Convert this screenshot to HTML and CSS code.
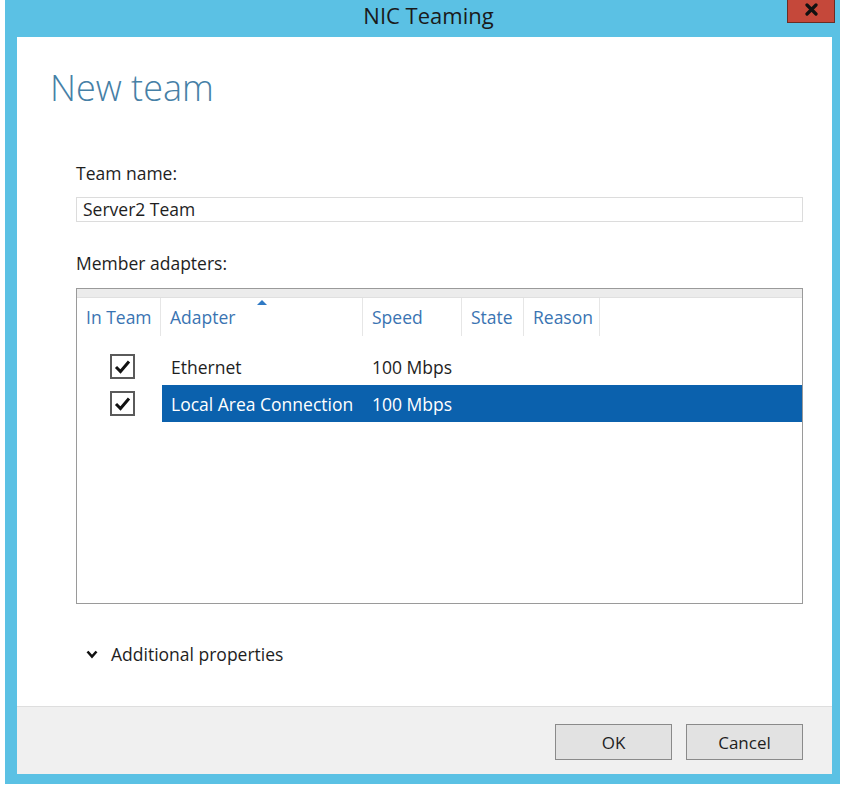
FILE: index.html
```html
<!DOCTYPE html>
<html lang="en">
<head>
    <meta charset="UTF-8">
    <title>NIC Teaming</title>
    <link rel="stylesheet" href="styles.css">
</head>
<body>
    <div class="window">
        <div class="titlebar">
            <span class="title">NIC Teaming</span>
            <button class="close-btn" aria-label="Close">
                <svg width="13" height="13" viewBox="0 0 13 13"><path d="M2 2 L11 11 M11 2 L2 11" stroke="#111" stroke-width="3.2" stroke-linecap="round"/></svg>
            </button>
        </div>
        <div class="content">
            <div class="main">
                <h1 class="heading">New team</h1>

                <label class="field-label">Team name:</label>
                <div class="text-input">Server2 Team</div>

                <label class="field-label adapters-label">Member adapters:</label>
                <div class="list-box">
                    <div class="list-top"></div>
                    <div class="list-header">
                        <div class="col">In Team</div>
                        <div class="col sorted">Adapter</div>
                        <div class="col">Speed</div>
                        <div class="col">State</div>
                        <div class="col">Reason</div>
                        <div class="col last"></div>
                    </div>
                    <div class="list-body">
                        <div class="list-row">
                            <div class="check-cell">
                                <span class="checkbox">
                                    <svg width="17" height="15" viewBox="0 0 17 15"><path d="M2 8 L6.5 12.5 L15 2.5" fill="none" stroke="#111" stroke-width="3"/></svg>
                                </span>
                            </div>
                            <div class="row-data">
                                <div class="cell">Ethernet</div>
                                <div class="cell">100 Mbps</div>
                                <div class="cell"></div>
                                <div class="cell"></div>
                                <div class="cell"></div>
                            </div>
                        </div>
                        <div class="list-row selected">
                            <div class="check-cell">
                                <span class="checkbox">
                                    <svg width="17" height="15" viewBox="0 0 17 15"><path d="M2 8 L6.5 12.5 L15 2.5" fill="none" stroke="#111" stroke-width="3"/></svg>
                                </span>
                            </div>
                            <div class="row-data">
                                <div class="cell">Local Area Connection</div>
                                <div class="cell">100 Mbps</div>
                                <div class="cell"></div>
                                <div class="cell"></div>
                                <div class="cell"></div>
                            </div>
                        </div>
                    </div>
                </div>

                <div class="expander">
                    <svg class="chevron" width="12" height="9" viewBox="0 0 12 9">
                        <polyline points="1.5,1.5 6,6.5 10.5,1.5" fill="none" stroke="#111" stroke-width="2.6"/>
                    </svg>
                    <span>Additional properties</span>
                </div>
            </div>

            <div class="footer">
                <button class="dlg-btn">OK</button>
                <button class="dlg-btn">Cancel</button>
            </div>
        </div>
    </div>
</body>
</html>
```

FILE: styles.css
```css
body {
    margin: 0;
    background: #ffffff;
    font-family: "Open Sans", "Noto Sans", sans-serif;
    color: #1e1e1e;
}

.window {
    margin-left: 5px;
    width: 835px;
    box-sizing: border-box;
    background: #5bc1e4;
    padding: 0 8px 10px 12px;
}

.titlebar {
    height: 37px;
    position: relative;
    display: flex;
    justify-content: center;
    align-items: center;
}

.title {
    font-size: 22px;
    color: #1a1a1a;
    margin-top: -7px;
    margin-left: 8px;
}

.close-btn {
    position: absolute;
    top: 0;
    right: -3px;
    width: 48px;
    height: 23px;
    background: #c5483a;
    border: 1px solid #6a2d24;
    border-top: none;
    padding: 0 0 3px 0;
    display: flex;
    align-items: center;
    justify-content: center;
}

.content {
    background: #ffffff;
    height: 737px;
    display: flex;
    flex-direction: column;
}

.main {
    flex: 1;
    padding: 0 29px 0 59px;
}

.heading {
    margin: 27px 0 0 -26px;
    font-size: 36px;
    font-weight: 300;
    color: #4680a6;
    line-height: 48px;
}

.field-label {
    display: block;
    font-size: 17.5px;
    line-height: 24px;
    margin-top: 49px;
}

.text-input {
    margin-top: 12px;
    height: 25px;
    border: 1px solid #dcdcdc;
    box-sizing: border-box;
    padding-left: 6px;
    font-size: 17.5px;
    line-height: 23px;
}

.adapters-label {
    margin-top: 29px;
}

.list-box {
    margin-top: 13px;
    height: 316px;
    box-sizing: border-box;
    border: 1px solid #9a9a9a;
}

.list-top {
    height: 8px;
    background: #ececec;
    border-bottom: 1px solid #e0e0e0;
}

.list-header {
    display: grid;
    grid-template-columns: 84px 202px 99px 62px 76px 1fr;
    height: 38px;
}

.col {
    border-right: 1px solid #e6e6e6;
    padding-left: 9px;
    font-size: 17.5px;
    line-height: 38px;
    color: #3a74b2;
    position: relative;
    white-space: nowrap;
}

.col.last {
    border-right: none;
}

.col.sorted::before {
    content: "";
    position: absolute;
    top: 2px;
    left: 96px;
    border-left: 5px solid transparent;
    border-right: 5px solid transparent;
    border-bottom: 5px solid #2f79c4;
}

.list-body {
    padding-top: 12px;
}

.list-row {
    display: grid;
    grid-template-columns: 85px 1fr;
    height: 37px;
}

.check-cell {
    display: flex;
    align-items: center;
    padding-left: 33px;
}

.checkbox {
    width: 25px;
    height: 25px;
    box-sizing: border-box;
    border: 2px solid #5a5a5a;
    background: #fff;
    display: flex;
    align-items: center;
    justify-content: center;
}

.row-data {
    display: grid;
    grid-template-columns: 201px 99px 62px 76px 1fr;
    align-items: center;
    font-size: 17.5px;
}

.cell {
    padding-left: 9px;
    white-space: nowrap;
}

.list-row.selected .row-data {
    background: #0b61ad;
    color: #ffffff;
}

.expander {
    margin-top: 38px;
    display: flex;
    align-items: center;
    gap: 13px;
    font-size: 17.5px;
    padding-left: 10px;
}

.footer {
    height: 68px;
    box-sizing: border-box;
    background: #f0f0f0;
    border-top: 1px solid #dedede;
    display: flex;
    justify-content: flex-end;
    align-items: flex-start;
    gap: 14px;
    padding: 17px 29px 0 0;
}

.dlg-btn {
    width: 117px;
    height: 36px;
    background: #e2e2e2;
    border: 1px solid #8a8a8a;
    font-family: "Open Sans", "Noto Sans", sans-serif;
    font-size: 17px;
    color: #1e1e1e;
}
```
